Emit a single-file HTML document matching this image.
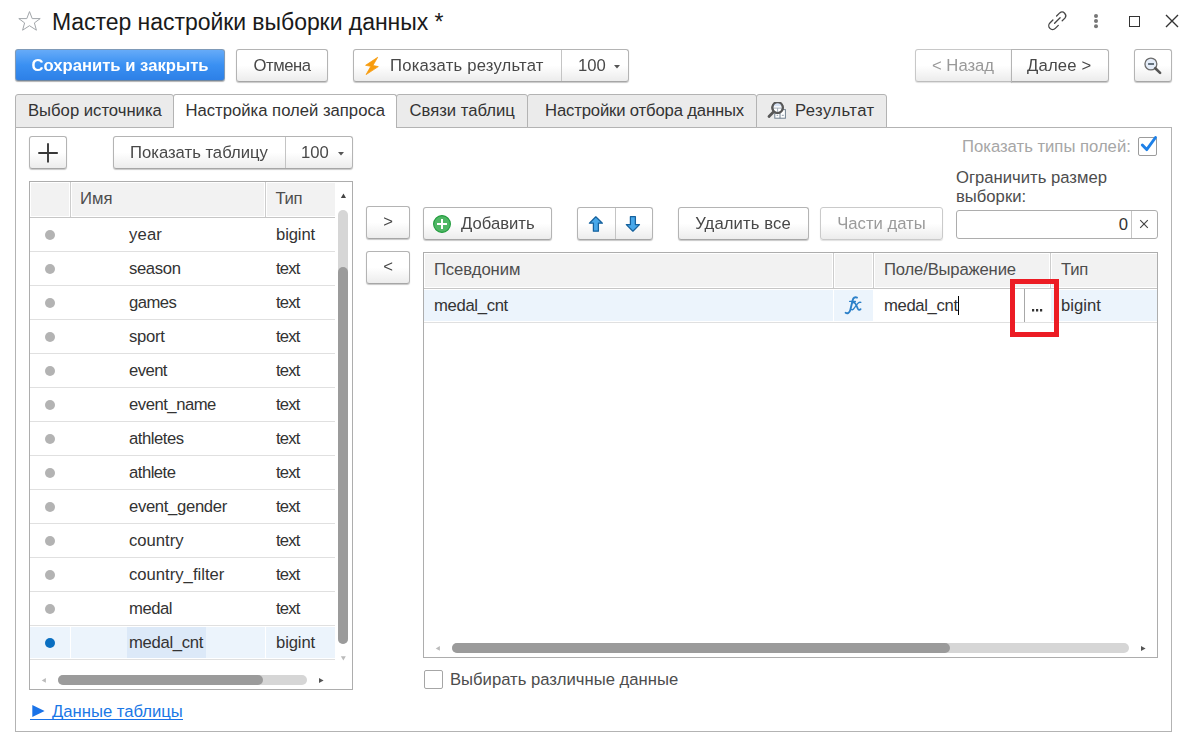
<!DOCTYPE html>
<html><head><meta charset="utf-8">
<style>
*{box-sizing:border-box;margin:0;padding:0}
html,body{width:1193px;height:737px;overflow:hidden;background:#fff}
body{position:relative;font-family:"Liberation Sans",sans-serif;font-size:16.67px;color:#333}
.a{position:absolute;white-space:nowrap}
.btn{position:absolute;height:33px;border:1px solid #b4b4b4;border-bottom-color:#a6a6a6;border-radius:3px;
 background:linear-gradient(#fff 0%,#fff 50%,#ececec 100%);box-shadow:0 1px 1px rgba(0,0,0,.22);
 color:#484848;line-height:32px;text-align:center;white-space:nowrap;will-change:transform}
.sep{position:absolute;top:0;bottom:0;width:1px;background:#c4c4c4}
.tab{position:absolute;top:94px;height:34px;border:1px solid #b3b3b3;border-radius:3px 3px 0 0;background:#ebebeb;line-height:32px;color:#333;white-space:nowrap}
.tab.act{background:#fff;border-bottom:none;height:34px}
.grid{position:absolute;border:1px solid #adadad;background:#fff;overflow:hidden}
.hdr{position:absolute;left:0;top:0;height:36px;background:#cdcdcd;border-bottom:1px solid #c6c6c6}
.hc{position:absolute;top:0;height:35px;background:#f2f2f2;border:1px solid #fff}
.hsep{position:absolute;top:0;height:35px;width:2px;border-left:1px solid #d9d9d9;border-right:1px solid #fff}
.vs{position:absolute;top:0;height:33px;width:1px;background:#fff}
.row{position:absolute;left:0;width:305px;height:34px;border-bottom:1px solid #e0e0e0;line-height:33px}
.dot{top:12px;position:absolute;left:15px;width:10px;height:10px;border-radius:50%;background:#b3b3b3}
</style></head><body>

<!-- title bar -->
<svg class="a" style="left:14px;top:8px" width="32" height="26" viewBox="0 0 32 26"><path d="M15.5 3.6 L18.2 10.6 L26.2 10.6 L20.4 14.9 L22.4 22.2 L15.5 17.7 L8.6 22.2 L10.6 14.9 L4.8 10.6 L12.8 10.6 Z" fill="none" stroke="#a2a6aa" stroke-width="1" stroke-linejoin="miter"/></svg>
<div class="a" style="left:52px;top:7px;font-size:23px;line-height:30px;color:#1a1a1a;letter-spacing:-0.05px">Мастер настройки выборки данных *</div>

<!-- top-right icons -->

<svg class="a" style="left:1092px;top:12px" width="8" height="18"><circle cx="4" cy="4" r="2" fill="#777"/><circle cx="4" cy="9" r="2" fill="#777"/><circle cx="4" cy="14.3" r="2" fill="#777"/></svg>
<div class="a" style="left:1129px;top:16px;width:11px;height:11px;border:1.5px solid #333"></div>
<svg class="a" style="left:1164px;top:13px" width="16" height="16"><path d="M2 2 L14 14 M14 2 L2 14" stroke="#333" stroke-width="1.4"/></svg>

<!-- toolbar -->
<div class="btn" style="left:15px;top:49px;width:210px;height:32px;border-color:#7f9ab8;border-bottom-color:#6f86a0;background:linear-gradient(#66abf8,#3a90f2 50%,#2d80e7);color:#fff;font-weight:bold;box-shadow:0 1px 1px rgba(0,0,0,.3)">Сохранить и закрыть</div>
<div class="btn" style="left:236px;top:49px;width:92px;letter-spacing:-0.45px;padding-left:0px">Отмена</div>
<div class="btn" style="left:353px;top:49px;width:276px;text-align:left">
  <svg class="a" style="left:6px;top:2px" width="24" height="26" viewBox="0 0 24 26"><path d="M17.7 5.3 L5.6 13.3 L10.8 14.3 L6.1 22.6 L18.3 14.6 L12.9 13.5 Z" fill="#f89c0e" stroke="#f89c0e" stroke-width="0.8" stroke-linejoin="round"/></svg>
  <span class="a" style="left:36px;top:0;letter-spacing:0.2px">Показать результат</span>
  <div class="sep" style="left:207px"></div>
  <span class="a" style="left:224px;top:0">100</span>
  <svg class="a" style="left:260px;top:15px" width="6" height="4"><path d="M0 0 L6 0 L3 3.5Z" fill="#555"/></svg>
</div>
<div class="btn" style="left:915px;top:49px;width:97px;text-align:left;border-color:#c8c8c8;border-bottom-color:#bdbdbd;border-radius:3px 0 0 3px;box-shadow:0 1px 1px rgba(0,0,0,.12)">
  <span class="a" style="left:16px;top:0;color:#999">&lt; Назад</span>
</div>
<div class="btn" style="left:1011px;top:49px;width:98px;text-align:left;border-radius:0 3px 3px 0">
  <span class="a" style="left:15px;top:0;letter-spacing:0.2px">Далее &gt;</span>
</div>
<div class="btn" style="left:1134px;top:49px;width:38px">
  <svg class="a" style="left:7px;top:5px" width="22" height="22" viewBox="0 0 22 22"><circle cx="8.9" cy="9" r="5.95" fill="#e5edf9" stroke="#6b6b6b" stroke-width="1.3"/><path d="M6.1 9 H12" stroke="#4d5b68" stroke-width="1.7"/><path d="M13.3 13.2 L18.1 17.9" stroke="#555" stroke-width="2.6" stroke-linecap="round"/></svg>
</div>

<!-- tabs -->
<div class="a" style="left:15px;top:127px;width:1157px;height:605px;border:1px solid #b3b3b3"></div>
<div class="tab" style="left:15px;width:159px;padding-left:12px">Выбор источника</div>
<div class="tab" style="left:527px;width:230px;padding-left:17px;letter-spacing:-0.15px">Настройки отбора данных</div>
<div class="tab" style="left:396px;width:132px;padding-left:12.5px">Связи таблиц</div>
<div class="tab" style="left:756px;width:131px;padding-left:38px"><span style="letter-spacing:0.42px">Результат</span>
  <svg class="a" style="left:9px;top:7px" width="22" height="20" viewBox="0 0 22 20"><rect x="8.8" y="7.6" width="10.6" height="8.6" fill="#fff" stroke="#708090" stroke-width="1"/><path d="M14 7.5 V16.2" stroke="#708090" stroke-width="1"/><path d="M10.6 13.3 h1.6 M15.8 13.3 h2" stroke="#8090a0" stroke-width="0.9"/><circle cx="11.6" cy="5.6" r="5.3" fill="#fff" stroke="#585858" stroke-width="2"/><path d="M7.6 2.8 A5 5 0 0 1 15.6 2.8 L15.6 4.2 L7.6 4.2Z" fill="#d6e2f4"/><path d="M6.8 6.1 H16.4 M11.6 6.1 V10.5" stroke="#9aa6b4" stroke-width="0.9"/><circle cx="11.6" cy="5.6" r="5.3" fill="none" stroke="#585858" stroke-width="2"/><path d="M7.4 9.9 L3 14.4" stroke="#585858" stroke-width="2.8" stroke-linecap="round"/></svg>
</div>
<div class="tab act" style="left:173px;width:224px;padding-left:11.5px">Настройка полей запроса</div>


<!-- left panel -->
<div class="btn" style="left:29px;top:136px;width:38px">
  <svg class="a" style="left:8px;top:5px" width="21" height="21"><path d="M10 1.2 V20.6 M0.3 11 H19.8" stroke="#383838" stroke-width="1.9"/></svg>
</div>
<div class="btn" style="left:113px;top:136px;width:240px;text-align:left">
  <span class="a" style="left:16px;top:0">Показать таблицу</span>
  <div class="sep" style="left:171px"></div>
  <span class="a" style="left:187px;top:0">100</span>
  <svg class="a" style="left:224px;top:15px" width="6" height="4"><path d="M0 0 L6 0 L3 3.5Z" fill="#555"/></svg>
</div>

<div class="grid" style="left:29px;top:181px;width:324px;height:509px">
  <div class="hdr" style="width:305px">
    <div class="hc" style="left:0;width:40px"></div>
    <div class="hc" style="left:41px;width:194px"></div>
    <div class="hc" style="left:236px;width:69px;border-right:none"></div>
    <span class="a" style="left:50px;top:0;line-height:33px;color:#4d4d4d">Имя</span>
    <span class="a" style="left:245.5px;top:0;line-height:33px;color:#4d4d4d;letter-spacing:-0.4px">Тип</span>
  </div>
  <div class="row" style="top:36px"><div class="dot"></div><span class="a" style="left:99px;top:0;letter-spacing:0.15px">year</span><span class="a" style="left:246px;top:0;letter-spacing:-0.12px">bigint</span></div>
<div class="row" style="top:70px"><div class="dot"></div><span class="a" style="left:99px;top:0;letter-spacing:-0.36px">season</span><span class="a" style="left:246px;top:0;letter-spacing:-0.8px">text</span></div>
<div class="row" style="top:104px"><div class="dot"></div><span class="a" style="left:99px;top:0;letter-spacing:-0.57px">games</span><span class="a" style="left:246px;top:0;letter-spacing:-0.8px">text</span></div>
<div class="row" style="top:138px"><div class="dot"></div><span class="a" style="left:99px;top:0;letter-spacing:-0.3px">sport</span><span class="a" style="left:246px;top:0;letter-spacing:-0.8px">text</span></div>
<div class="row" style="top:172px"><div class="dot"></div><span class="a" style="left:99px;top:0;letter-spacing:-0.57px">event</span><span class="a" style="left:246px;top:0;letter-spacing:-0.8px">text</span></div>
<div class="row" style="top:206px"><div class="dot"></div><span class="a" style="left:99px;top:0;letter-spacing:-0.48px">event_name</span><span class="a" style="left:246px;top:0;letter-spacing:-0.8px">text</span></div>
<div class="row" style="top:240px"><div class="dot"></div><span class="a" style="left:99px;top:0;letter-spacing:-0.46px">athletes</span><span class="a" style="left:246px;top:0;letter-spacing:-0.8px">text</span></div>
<div class="row" style="top:274px"><div class="dot"></div><span class="a" style="left:99px;top:0;letter-spacing:-0.5px">athlete</span><span class="a" style="left:246px;top:0;letter-spacing:-0.8px">text</span></div>
<div class="row" style="top:308px"><div class="dot"></div><span class="a" style="left:99px;top:0;letter-spacing:-0.33px">event_gender</span><span class="a" style="left:246px;top:0;letter-spacing:-0.8px">text</span></div>
<div class="row" style="top:342px"><div class="dot"></div><span class="a" style="left:99px;top:0;letter-spacing:0px">country</span><span class="a" style="left:246px;top:0;letter-spacing:-0.8px">text</span></div>
<div class="row" style="top:376px"><div class="dot"></div><span class="a" style="left:99px;top:0;letter-spacing:0px">country_filter</span><span class="a" style="left:246px;top:0;letter-spacing:-0.8px">text</span></div>
<div class="row" style="top:410px"><div class="dot"></div><span class="a" style="left:99px;top:0;letter-spacing:-0.45px">medal</span><span class="a" style="left:246px;top:0;letter-spacing:-0.8px">text</span></div>
<div class="row" style="top:444px;background:#ecf4fc;box-shadow:inset 0 1px 0 #fff,inset 0 -1px 0 #fff"><div class="dot" style="background:#0a6fc1"></div><div class="vs" style="left:40px"></div><div class="vs" style="left:235px"></div><div class="a" style="left:97px;top:1px;width:79px;height:31px;background:#dce9f8"></div><span class="a" style="left:99px;top:0;letter-spacing:-0.3px">medal_cnt</span><span class="a" style="left:246px;top:0;letter-spacing:-0.12px">bigint</span></div>
  <!-- v scrollbar -->
  <div class="a" style="left:308px;top:28px;width:10px;height:434px;border-radius:5px;background:#d6d6d6"></div>
  <div class="a" style="left:308px;top:85px;width:10px;height:377px;border-radius:5px;background:#9b9b9b"></div>
  <!-- h scrollbar -->
  <div class="a" style="left:28px;top:493px;width:249px;height:10px;border-radius:5px;background:#d6d6d6"></div>
  <div class="a" style="left:28px;top:493px;width:205px;height:10px;border-radius:5px;background:#9b9b9b"></div>
</div>

<svg class="a" style="left:32px;top:705px" width="13" height="12"><path d="M0.3 0 L12.6 6 L0.3 12Z" fill="#1a73e8"/></svg><span class="a" style="left:52px;top:700px;line-height:24px;color:#1a78e6">Данные таблицы</span><div class="a" style="left:30px;top:719px;width:153px;height:1px;background:#1a73e8"></div>

<!-- middle -->
<div class="btn" style="left:366px;top:206px;width:44px;line-height:30px">&gt;</div>
<div class="btn" style="left:366px;top:251px;width:44px;line-height:30px">&lt;</div>

<!-- right toolbar -->
<div class="btn" style="left:423px;top:207px;width:129px;text-align:left">
  <svg class="a" style="left:9px;top:7px" width="18" height="18"><circle cx="9" cy="9" r="8.4" fill="#4fb765" stroke="#1f9b3c" stroke-width="1.1"/><path d="M9 4 V14 M4 9 H14" stroke="#fff" stroke-width="2"/></svg>
  <span class="a" style="left:37px;top:0">Добавить</span>
</div>
<div class="btn" style="left:577px;top:207px;width:76px">
  
  <div class="sep" style="left:37px"></div>
  
</div>
<div class="btn" style="left:678px;top:207px;width:131px;padding-right:1px;letter-spacing:0.1px">Удалить все</div>
<div class="btn" style="left:820px;top:207px;width:123px;color:#9a9a9a;border-color:#cacaca;box-shadow:0 1px 1px rgba(0,0,0,.12)">Части даты</div>

<span class="a" style="left:962px;top:131px;line-height:32px;color:#a6a6a6">Показать типы полей:</span>
<div class="a" style="left:1138px;top:137px;width:19px;height:19px;border:1px solid #9c9c9c;border-radius:2px;background:#fff"></div>
<svg class="a" style="left:1136px;top:132px" width="26" height="22"><path d="M6.3 13 L10.7 17.6 L19.5 5.5" fill="none" stroke="#1d80e8" stroke-width="2.9" stroke-linecap="round" stroke-linejoin="round"/></svg>
<div class="a" style="left:956px;top:168px;line-height:19px;color:#4d4d4d;white-space:normal">Ограничить размер<br>выборки:</div>
<div class="a" style="left:956px;top:210px;width:202px;height:29px;border:1px solid #adadad;border-radius:3px;background:#fff">
  <span class="a" style="right:29px;top:0;line-height:28px;color:#333">0</span>
  <div class="a" style="left:174px;top:0;width:1px;height:27px;background:#c6c6c6"></div>
  <svg class="a" style="left:182px;top:8px" width="10" height="10"><path d="M1.2 1.2 L8.8 8.8 M8.8 1.2 L1.2 8.8" stroke="#444" stroke-width="1.15"/></svg>
</div>

<div class="grid" style="left:423px;top:252px;width:735px;height:406px">
  <div class="hdr" style="width:733px">
    <div class="hc" style="left:0;width:409px"></div>
    <div class="hc" style="left:410px;width:39px"></div>
    <div class="hc" style="left:450px;width:176px"></div>
    <div class="hc" style="left:627px;width:106px;border-right:none"></div>
    <span class="a" style="left:10px;top:0;line-height:33px;color:#4d4d4d;letter-spacing:-0.1px">Псевдоним</span>
    <span class="a" style="left:460px;top:0;line-height:33px;color:#4d4d4d;letter-spacing:-0.17px">Поле/Выражение</span>
    <span class="a" style="left:637px;top:0;line-height:33px;color:#4d4d4d;letter-spacing:-0.3px">Тип</span>
  </div>
  <div class="row" style="top:36px;width:733px;background:#ecf4fc;box-shadow:inset 0 1px 0 #fff,inset 0 -1px 0 #fff">
    <span class="a" style="left:10px;top:0;letter-spacing:-0.33px">medal_cnt</span>
    <div class="vs" style="left:409px"></div>
    
    <div class="a" style="left:449px;top:0;width:178px;height:33px;background:#fff"></div>
    <span class="a" style="left:460px;top:0;letter-spacing:-0.35px">medal_cnt</span>
    <div class="a" style="left:534px;top:7px;width:1px;height:19px;background:#000"></div>
    <div class="a" style="left:600px;top:0;width:1px;height:33px;background:#a8a8a8"></div>
    
    <div class="vs" style="left:626px"></div>
    <span class="a" style="left:637px;top:0">bigint</span>
  </div>
  <!-- h scrollbar -->
  <div class="a" style="left:28px;top:390px;width:677px;height:10px;border-radius:5px;background:#d6d6d6"></div>
  <div class="a" style="left:28px;top:390px;width:498px;height:10px;border-radius:5px;background:#9b9b9b"></div>
</div>
<div class="a" style="left:1010px;top:279px;width:49px;height:58px;border:5px solid #ec1c24"></div>

<div class="a" style="left:424px;top:670px;width:19px;height:19px;border:1px solid #a6a6a6;border-radius:2px;background:#fff"></div>
<span class="a" style="left:450px;top:664px;line-height:32px;color:#4d4d4d">Выбирать различные данные</span>

<svg class="a" style="left:0;top:0" width="1193" height="737">
<path d="M340.9 198 L346 198 L343.45 193.4Z" fill="#444"/>
<path d="M340.9 656.2 L345.8 656.2 L343.35 660.5Z" fill="#bbb"/>
<path d="M45.9 678 L45.9 682.8 L41.7 680.4Z" fill="#bbb"/>
<path d="M319 678.1 L319 683 L323.6 680.55Z" fill="#555"/>
<path d="M439.9 646.1 L439.9 650.7 L435.7 648.4Z" fill="#bbb"/>
<path d="M1141 646.1 L1141 650.9 L1145.6 648.5Z" fill="#555"/>
<path d="M595.8 216.8 L602.4 223.2 L598.4 223.2 L598.4 231.2 L593.4 231.2 L593.4 223.2 L589.4 223.2 Z" fill="#48a8ea" stroke="#16629e" stroke-width="1.25" stroke-linejoin="round"/>
<path d="M632.9 231.2 L639.5 224.6 L635.4 224.6 L635.4 216.7 L630.4 216.7 L630.4 224.6 L626.3 224.6 Z" fill="#48a8ea" stroke="#16629e" stroke-width="1.25" stroke-linejoin="round"/>
<g fill="none" stroke="#2c80c9" stroke-linecap="round">
<path d="M857 297.6 C855 296.6 853.2 297.8 852.6 300.5 L850.3 310 C849.6 312.8 847.5 314 845.6 312.8" stroke-width="1.9"/>
<path d="M849.6 301.4 H855.4" stroke-width="1.3"/>
<path d="M852.6 302.6 C854.3 301.9 855.3 303 856.2 305 L857.8 308.6 C858.5 310 859.6 310.3 860.6 309.2" stroke-width="1.8"/>
<path d="M860.8 302.4 C859.6 301.9 858.6 302.4 857.6 303.6 L854 308.4 C853.2 309.6 852.2 310.1 851.4 309.4" stroke-width="1.3"/>
</g>
<path d="M1032 309h2.2v2.4h-2.2zM1036 309h2.2v2.4h-2.2zM1040 309h2.2v2.4h-2.2z" fill="#333"/>
<g fill="none" stroke="#444" stroke-width="1.3" stroke-linecap="round">
<path d="M1056.6 16 L1059.7 12.9 A3.7 3.7 0 0 1 1064.9 18.1 L1062.2 20.8"/>
<path d="M1052.9 20 L1049.9 23 A3.8 3.8 0 0 0 1055.3 28.4 L1058.3 25.4"/>
<path d="M1054.6 23.3 L1060.1 17.8"/>
</g>
</svg>
</body></html>
